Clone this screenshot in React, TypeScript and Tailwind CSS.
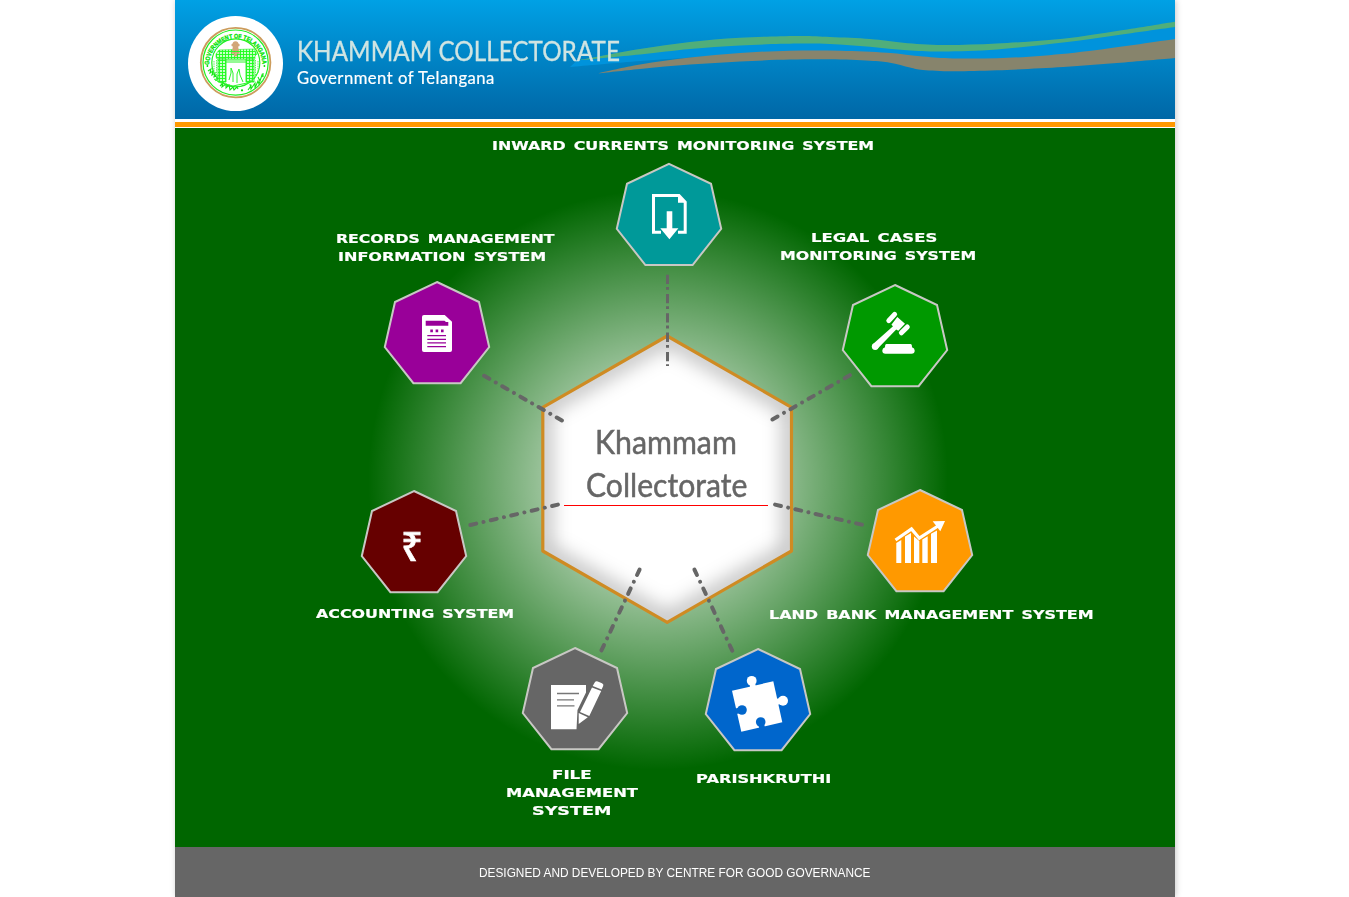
import { useLayoutEffect, useRef, useState } from "react";

type Point = [number, number];

/** Single line of text stretched horizontally to a fixed width. */
function FitText({ text, width, className = "" }: { text: string; width: number; className?: string }) {
  const ref = useRef<HTMLSpanElement>(null);
  const [scale, setScale] = useState(1);
  useLayoutEffect(() => {
    if (ref.current) setScale(width / ref.current.offsetWidth);
  }, [width, text]);
  return (
    <span
      ref={ref}
      className={`inline-block origin-left whitespace-nowrap ${className}`}
      style={{ transform: `scaleX(${scale})` }}
    >
      {text}
    </span>
  );
}

/** Smooth closed ribbon through an upper and a lower edge. */
function curve(points: Point[]) {
  let d = "";
  for (let i = 0; i < points.length - 1; i++) {
    const p0 = points[i - 1] ?? points[i];
    const p1 = points[i];
    const p2 = points[i + 1];
    const p3 = points[i + 2] ?? p2;
    d += ` C${p1[0] + (p2[0] - p0[0]) / 6} ${p1[1] + (p2[1] - p0[1]) / 6} ${p2[0] - (p3[0] - p1[0]) / 6} ${p2[1] - (p3[1] - p1[1]) / 6} ${p2[0]} ${p2[1]}`;
  }
  return d;
}

function ribbon(top: Point[], bottom: Point[]) {
  return `M${top[0].join(" ")}${curve(top)} L${bottom[0].join(" ")}${curve(bottom)} Z`;
}

const greenTop: Point[] = [[577, 60.5], [590, 58], [640, 49], [690, 42], [740, 37.8], [797, 36], [830, 37], [870, 39], [903, 42.7], [943, 45], [997, 43.5], [1063, 38.7], [1120, 30.5], [1175, 21.7]];
const greenBottom: Point[] = [[1175, 27], [1120, 34.7], [1063, 42.5], [997, 49.5], [943, 51.5], [907, 50.3], [870, 46.7], [830, 44], [797, 43.6], [740, 45.4], [690, 49], [640, 54.5], [577, 60.5]];
const brownTop: Point[] = [[597, 73.5], [640, 64.5], [690, 57.5], [740, 53], [790, 50.7], [840, 50.7], [887, 52.7], [923, 56.5], [953, 58.4], [997, 58.2], [1043, 55.7], [1097, 50], [1175, 39]];
const brownBottom: Point[] = [[1175, 58], [1117, 63], [1063, 67], [997, 70.3], [953, 71.3], [923, 70], [910, 67.5], [890, 62.7], [870, 60.7], [830, 59.3], [790, 59.6], [740, 61.4], [690, 64.6], [640, 69], [597, 73.5]];
const gapBottom: Point[] = [[1175, 41], [1097, 52], [1043, 57], [997, 60], [953, 60], [923, 58], [887, 54], [840, 52], [790, 52], [740, 54], [690, 57.5], [640, 61], [570, 67]];

function Waves() {
  return (
    <svg className="absolute inset-0" width="1000" height="119" viewBox="175 0 1000 119" aria-hidden="true">
      <path d={ribbon(greenTop, gapBottom)} fill="#0093dc" />
      <path d={ribbon(greenTop, greenBottom)} fill="#50ae7a" />
      <path d={ribbon(brownTop, brownBottom)} fill="#87846c" />
    </svg>
  );
}

function Emblem() {
  return (
    <svg width="95" height="95" viewBox="188 16 95 95" className="shrink-0">
      <defs>
        <path id="emblem-arc" d="M209.2 65 A26.6 26.6 0 0 1 262.4 65" />
        <pattern id="masonry" width="3" height="3" patternUnits="userSpaceOnUse">
          <rect width="3" height="3" fill="#c9ffc9" />
          <path d="M0 .5H3M.5 0V3" stroke="#1bff1b" strokeWidth=".9" />
        </pattern>
      </defs>
      <circle cx="235.5" cy="63.5" r="47.5" fill="#fff" />
      <circle cx="235.6" cy="62.6" r="34.8" fill="none" stroke="#cc9c5c" strokeWidth="1.8" />
      <circle cx="235.6" cy="62.6" r="32.6" fill="none" stroke="#1ef01e" strokeWidth="1.2" />
      <circle cx="235.8" cy="62.8" r="24" fill="none" stroke="#1ef01e" strokeWidth="1.2" />
      <text fontFamily="Liberation Sans" fontSize="6.4" fontWeight="700" fill="#00e400" stroke="#00e400" strokeWidth=".3">
        <textPath href="#emblem-arc" textLength="82" lengthAdjust="spacingAndGlyphs">GOVERNMENT OF TELANGANA</textPath>
      </text>
      <circle cx="207.4" cy="66" r=".9" fill="#00e000" />
      <circle cx="264.4" cy="66" r=".9" fill="#00e000" />
      <circle cx="242" cy="90.3" r="1.1" fill="#00e000" />
      <g fill="none" stroke="#16e616" strokeWidth="1.1">
        <path d="M208 71l3-2-1 4 3-2-1 4 3-2-1 4 3-1-1 4 3-2 0 3" />
        <path d="M220 86l3-3-1 4 4-3 0 4 3-3 1 5 3-3 1 3 3-3 1 2" />
        <path d="M248 90l3-4 0 3 4-6 0 5 3-7 1 3 3-9 1 2 0-4M258 77l2 4M250 84l1 5" />
      </g>
      <path d="M216 54l3-4 35-1 3 5-2 2v3h-38l-1-2z" fill="url(#masonry)" stroke="#28ee28" strokeWidth=".6" />
      <path d="M218 59h8v23h-8zM246 59h8v23h-8z" fill="url(#masonry)" stroke="#28ee28" strokeWidth=".9" />
      <path d="M226 60h20M226 62h20M229 80l2-7 0-5 2 5v9M237 83v-9l2-5 1 6 3 7M214 79l7 4 12 3 14-3 8-5" fill="none" stroke="#2bf42b" strokeWidth="1" />
      <path d="M214 61v13M216.5 60v20M255.5 60v18M258 61v12" stroke="#59f759" strokeWidth="1" strokeDasharray="1.5 .8" />
      <g fill="#d2a678">
        <circle cx="235.5" cy="44" r="2.8" />
        <circle cx="232.9" cy="45" r="1.5" />
        <circle cx="238.2" cy="45" r="1.5" />
        <path d="M233 46h5l1 5h-7zM231.5 52h8v1.8h-8zM234 54h3v2.3h-3z" />
      </g>
    </svg>
  );
}

const nodes = [
  { name: "inward", x: 669, y: 163.8, fill: "#009999" },
  { name: "records", x: 437, y: 282, fill: "#990099" },
  { name: "legal", x: 895, y: 285, fill: "#009900" },
  { name: "accounting", x: 414, y: 491, fill: "#660000" },
  { name: "land", x: 920, y: 490, fill: "#ff9900" },
  { name: "file", x: 575, y: 648, fill: "#666666" },
  { name: "parishkruthi", x: 758, y: 649, fill: "#0066cc" },
];

const connectors: [Point, Point][] = [
  [[486.7, 377.3], [559.3, 419]],
  [[847.3, 376.7], [775, 418]],
  [[473.3, 524.3], [555, 505.3]],
  [[778, 505.3], [859, 524]],
  [[638.3, 572.3], [602.7, 647.7]],
  [[695.7, 572.3], [731, 648]],
];

function Connector({ from, to }: { from: Point; to: Point }) {
  const dx = to[0] - from[0];
  const dy = to[1] - from[1];
  const length = Math.hypot(dx, dy);
  const dash = 6;
  const ux = (dx / length) * (dash / 2);
  const uy = (dy / length) * (dash / 2);
  const gap = (length / 4 - dash) / 2;
  return (
    <path
      d={`M${from[0] - ux} ${from[1] - uy}L${to[0] + ux} ${to[1] + uy}`}
      stroke="#666"
      strokeWidth="4"
      strokeLinecap="round"
      strokeDasharray={`${dash} ${gap} 0.01 ${gap}`}
    />
  );
}

const hexagon = "M667.2 336L791.5 407.3V551L667.2 622.3L542.8 551V407.3Z";

function Diagram() {
  return (
    <svg className="absolute inset-0" width="1000" height="719" viewBox="175 128 1000 719" aria-hidden="true">
      <defs>
        <radialGradient id="halo" gradientUnits="userSpaceOnUse" cx="658" cy="480" r="290">
          <stop offset="0" stopColor="#fff" />
          <stop offset="1" stopColor="#fff" stopOpacity="0" />
        </radialGradient>
        <filter id="soft" x="-20%" y="-20%" width="140%" height="140%">
          <feGaussianBlur stdDeviation="10" />
        </filter>
        <clipPath id="hex-clip">
          <path d={hexagon} />
        </clipPath>
      </defs>
      <circle cx="658" cy="480" r="290" fill="url(#halo)" />
      <path d={hexagon} fill="#fff" />
      <g clipPath="url(#hex-clip)">
        <path d={hexagon} fill="none" stroke="#000" strokeOpacity=".3" strokeWidth="15" filter="url(#soft)" />
      </g>
      <path d={hexagon} fill="none" stroke="#cf8b23" strokeWidth="3.2" strokeLinejoin="round" />

      <path d="M667.5 274.7V366" stroke="#666" strokeWidth="3" strokeDasharray="9.3 3 2.8 4.2" />
      {connectors.map(([from, to]) => (
        <Connector key={from.join()} from={from} to={to} />
      ))}
      <path d="M564 505.5H768" stroke="#f00" strokeWidth="1" />

      {nodes.map((n) => (
        <path
          key={n.name}
          transform={`translate(${n.x} ${n.y})`}
          d="M0 0L42 20L52.2 65L23.6 101.2H-23.6L-52.2 65L-42 20Z"
          fill={n.fill}
          stroke="#c8c8c4"
          strokeWidth="2"
        />
      ))}

      {/* inward currents: page with arrow */}
      <path d="M661 232.3H653.5V195.5H679L685.2 202V232.3H678" fill="none" stroke="#fff" strokeWidth="3" />
      <path d="M678 195V202.7H686.5Z M666.7 211.3H672.3V228.3H678.4L669.4 239.3L660.3 228.3H666.7Z" fill="#fff" />

      {/* records: ruled document */}
      <path d="M424 315H444.7L452 321.7V350Q452 352 450 352H424Q422 352 422 350V317Q422 315 424 315Z" fill="#fff" />
      <path
        d="M425.7 320.7H444.5L446 322H448.3V325.7H425.7ZM430.3 329.6h2.6v2.6h-2.6zM435.6 329.6h2.6v2.6h-2.6zM441 329.6h2.6v2.6h-2.6zM427.3 335H446v1.2H427.3zM427.3 338.8H446v1.2H427.3zM427.3 342.2H446v1.2H427.3zM427.3 346H446v1.2H427.3z"
        fill="#990099"
      />

      {/* legal: gavel */}
      <g stroke="#fff" strokeLinecap="round">
        <path d="M888.8 320.6L894.6 314.4M901.4 332.8L907.3 326.9" strokeWidth="5" />
      </g>
      <path d="M897.3 317L905 323.7L898.3 330.8L896.2 329.6L878.3 348A3.3 3.3 0 1 1 873.6 343.4L893 326.3L891.4 324.7Z" fill="#fff" />
      <circle cx="875.2" cy="346.6" r="3.4" fill="#fff" />
      <path d="M886.5 344H910.5Q912 344 912 347.3Q914.7 348 914.7 350.6Q914.7 353.8 911.5 353.8H885.5Q882.3 353.8 882.3 350.6Q882.3 348 885 347.3Q885 344 886.5 344Z" fill="#fff" />

      {/* land bank: rising chart */}
      <path d="M896.3 563V543L901.3 540V563ZM905 563V536.5L911 533V563ZM914 563V536.5L919.3 541V563ZM922.3 563V539.5L927.7 536.3V563ZM931 563V533.7L937 530.5V563Z" fill="#fff" />
      <path d="M895.5 540L911.5 529L919.3 538.2L938 526" fill="none" stroke="#fff" strokeWidth="3.2" />
      <path d="M932.7 521.3L945 521L940.3 531.3Z" fill="#fff" />

      {/* file: paper with pencil */}
      <path d="M551 685H586V692.5L577.5 710L576.5 729.3H551Z" fill="#fff" />
      <path d="M557 693.5H579M557 699.8H574M557 705.8H574.5" stroke="#777" strokeWidth="1.3" />
      <path d="M592 687.4L601.2 690.9L589.3 716L580 711.9ZM578.7 713L587.8 717.2L578.7 724Z" fill="#fff" />
      <path d="M594.7 682.6Q595.6 680.8 597.8 681.4L602 683.2Q604 684.4 603.2 686L601.6 689.6L592.7 686Z" fill="#fff" />

      {/* parishkruthi: jigsaw piece */}
      <path d="M732 690.7L773.3 681.3L782.3 722.3L741.3 731.7Z" fill="#fff" />
      <circle cx="751.7" cy="680.8" r="4.9" fill="#fff" />
      <path d="M749.5 683h5.5l1 4h-6zM776 699l4-1v6l-3 1z" fill="#fff" />
      <circle cx="783" cy="700.8" r="5" fill="#fff" />
      <circle cx="742" cy="710" r="4.8" fill="#0066cc" />
      <circle cx="760.7" cy="722" r="4.8" fill="#0066cc" />
      <path d="M734 709l5-1.5 1.5 5.5-5 1.2zM758.5 724h5.5l1.5 5-6 1.2z" fill="#0066cc" />
    </svg>
  );
}

const labels = [
  { text: "INWARD CURRENTS MONITORING SYSTEM", x: 492, y: 146, width: 382 },
  { text: "RECORDS MANAGEMENT", x: 336, y: 239, width: 218 },
  { text: "INFORMATION SYSTEM", x: 338, y: 257, width: 208 },
  { text: "LEGAL CASES", x: 811, y: 238, width: 126 },
  { text: "MONITORING SYSTEM", x: 780, y: 256, width: 196 },
  { text: "ACCOUNTING SYSTEM", x: 316, y: 614, width: 198 },
  { text: "LAND BANK MANAGEMENT SYSTEM", x: 769, y: 615, width: 324 },
  { text: "FILE", x: 552, y: 775, width: 40 },
  { text: "MANAGEMENT", x: 506, y: 793, width: 132 },
  { text: "SYSTEM", x: 532, y: 811, width: 80 },
  { text: "PARISHKRUTHI", x: 696, y: 779, width: 136 },
];

export default function App() {
  return (
    <div className="h-[897px] w-full overflow-hidden bg-white">
      <div className="ml-[175px] flex h-full w-[1000px] flex-col bg-white shadow-[1px_0_6px_rgba(0,0,0,0.22)]">
        <header className="relative flex h-[119px] shrink-0 items-start bg-linear-to-b from-[#00a1e5] to-[#0067a6] pt-4 pl-[13px]">
          <Waves />
          <div className="relative flex items-start gap-[14px]">
            <Emblem />
            <div className="flex flex-col pt-[19px] font-['Lato',sans-serif]">
              <h1 className="h-[31px] w-[323px] text-[27px] leading-8 text-[#cfe4e2] [-webkit-text-stroke:0.3px_#cfe4e2]">
                <FitText text="KHAMMAM COLLECTORATE" width={323} />
              </h1>
              <p className="h-6 w-[198px] text-[17.5px] leading-6 text-white [-webkit-text-stroke:0.2px_#fff]">
                <FitText text="Government of Telangana" width={198} className="tracking-[0.5px]" />
              </p>
            </div>
          </div>
        </header>
        <div className="mt-[3px] mb-px h-[5px] shrink-0 bg-[#ff9900]" />
        <main className="relative h-[719px] shrink-0 overflow-hidden bg-[#006600]">
          <Diagram />
          <div className="absolute top-[292px] left-[389px] flex w-[204px] flex-col items-start font-['Lato',sans-serif] text-[32px] leading-[43px] text-[#666] [-webkit-text-stroke:0.5px_#666]">
            <span className="h-[43px] pl-[31px]">
              <FitText text="Khammam" width={142} />
            </span>
            <span className="h-[43px] pl-[22px]">
              <FitText text="Collectorate" width={161} />
            </span>
          </div>
          <span className="absolute top-[393px] left-[226px] font-['Noto_Sans','DejaVu_Sans',sans-serif] text-[40px] leading-[50px] font-medium text-white [-webkit-text-stroke:0.7px_#fff]">
            <FitText text="₹" width={22} />
          </span>
          {labels.map((l) => (
            <div
              key={l.text}
              className="absolute h-[18px] font-['DejaVu_Sans',sans-serif] text-[12.5px] leading-[18px] font-bold text-white [-webkit-text-stroke:0.2px_#fff]"
              style={{ left: l.x - 175, top: l.y - 137, width: l.width }}
            >
              <FitText text={l.text} width={l.width} className="[word-spacing:2px]" />
            </div>
          ))}
        </main>
        <footer className="flex h-[50px] shrink-0 items-center justify-center bg-[#666] pt-px font-['Liberation_Sans',sans-serif] text-[12px] text-white">
          <div className="w-[392px]">
            <FitText text="DESIGNED AND DEVELOPED BY CENTRE FOR GOOD GOVERNANCE" width={392} />
          </div>
        </footer>
      </div>
    </div>
  );
}
